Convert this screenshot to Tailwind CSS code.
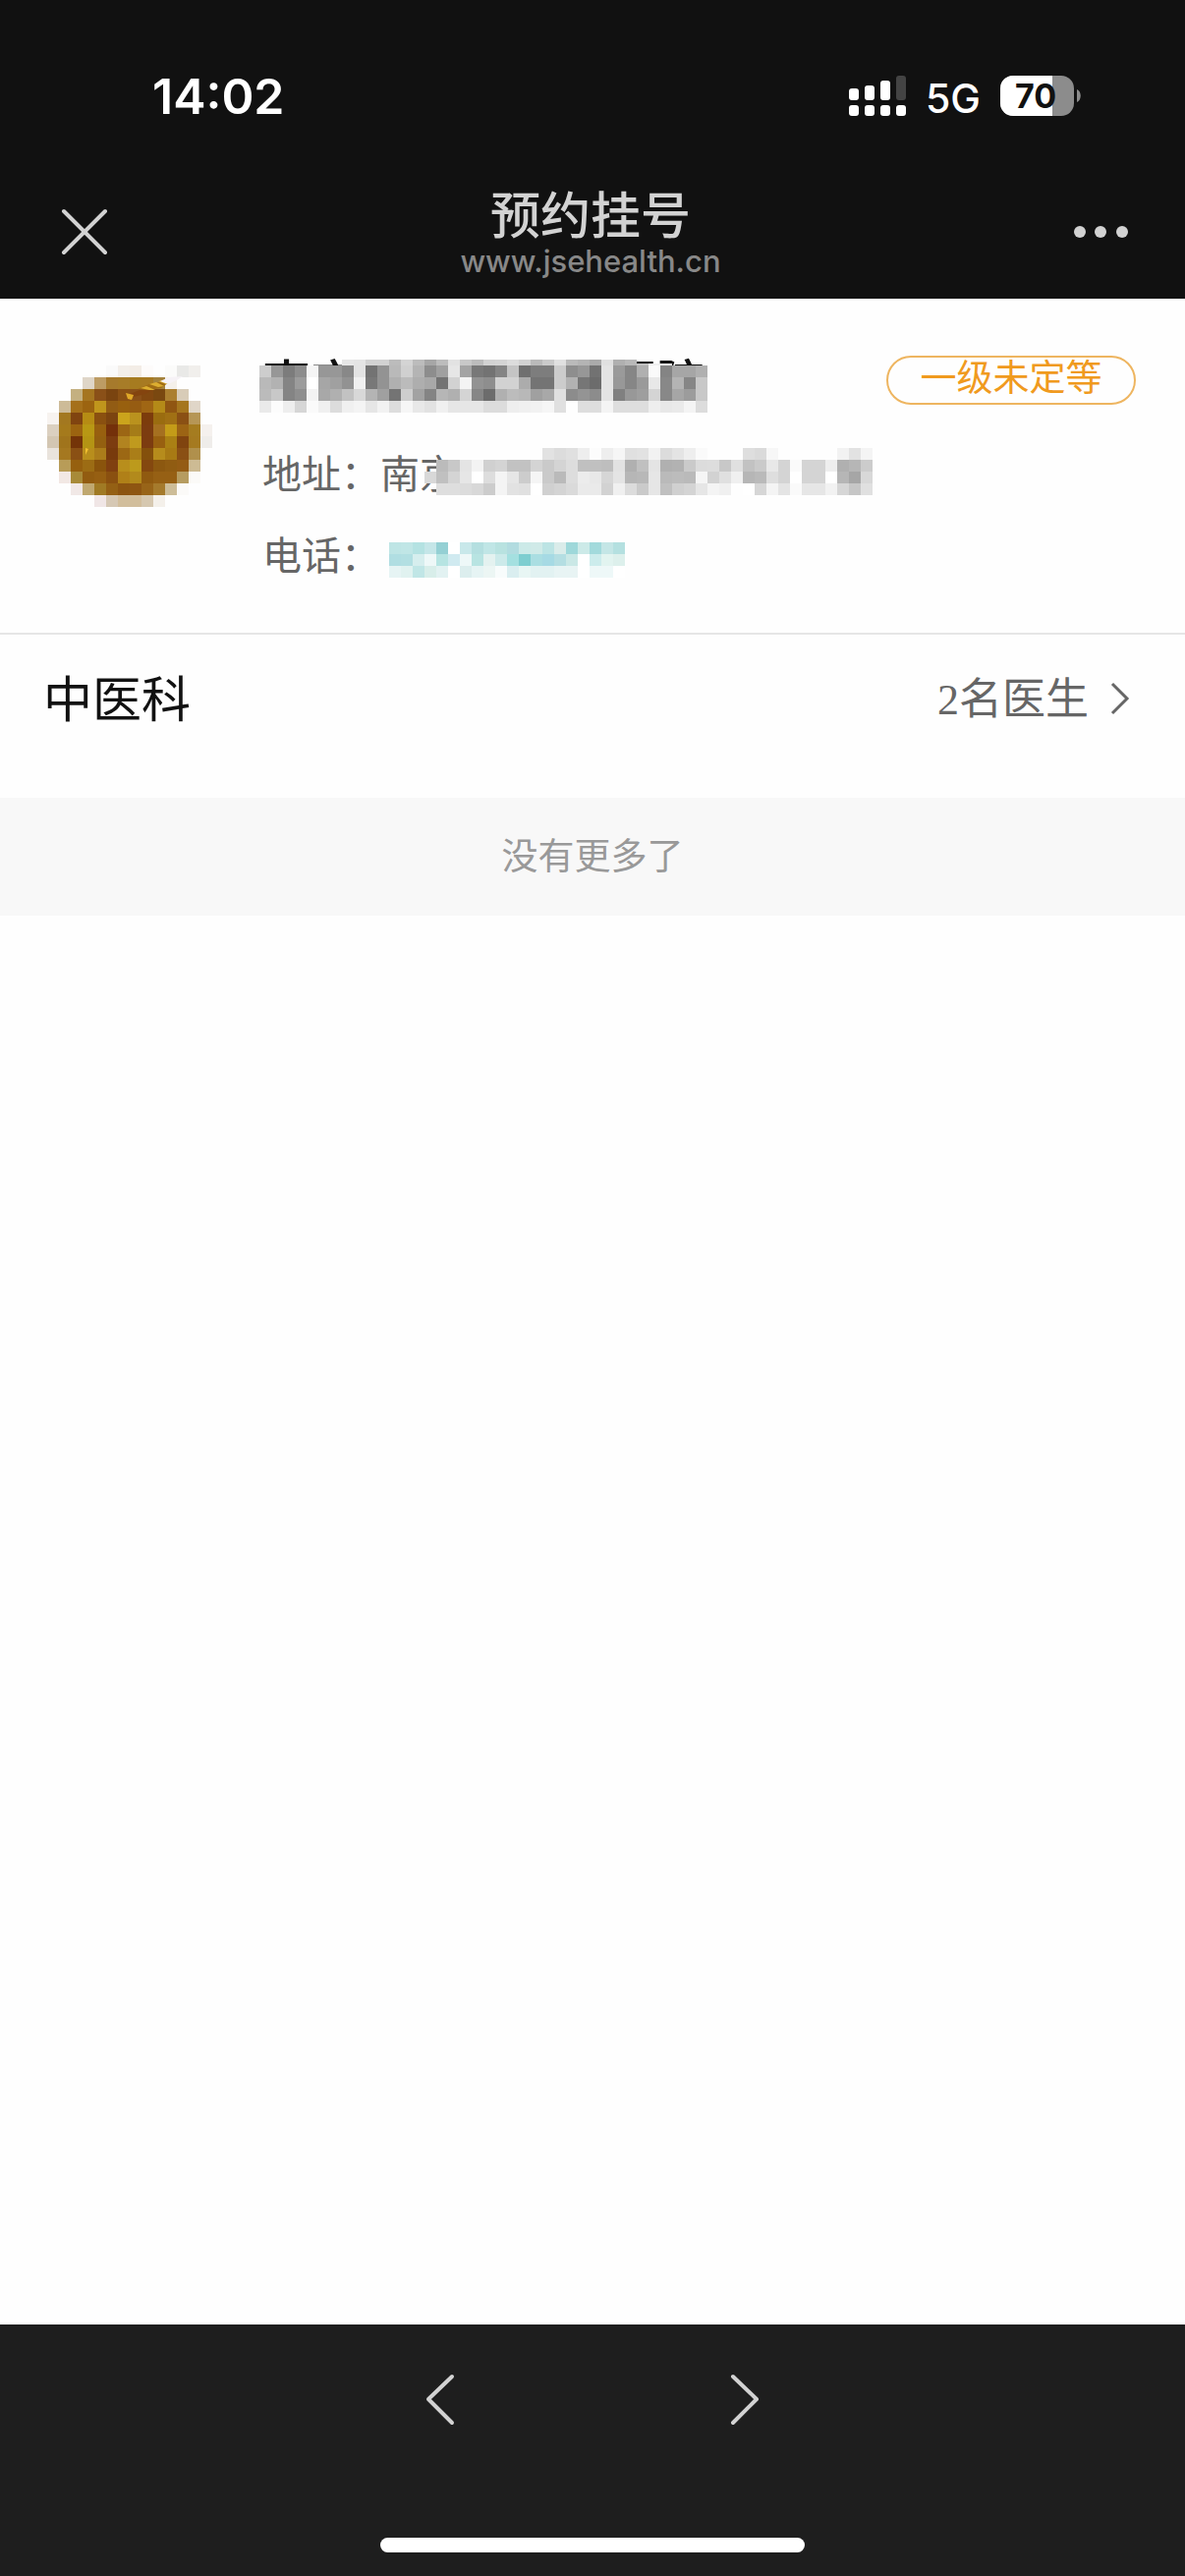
<!DOCTYPE html>
<html lang="zh-CN">
  <head>
    <meta charset="UTF-8" />
    <meta name="viewport" content="width=device-width, initial-scale=1.0" />
    <title>预约挂号</title>
    <!-- Tailwind CDN -->
    <script src="https://cdn.jsdelivr.net/npm/@tailwindcss/browser@4"></script>
  </head>
  <body
    class="min-h-screen flex flex-col bg-[#fefefe] font-['Inter','Noto_Sans_CJK_SC',sans-serif]"
  >
    <header class="bg-[#111111]">
      <!-- Status bar -->
      <div class="flex items-center justify-between h-[172px] pt-6 pl-[155px] pr-[106px] text-white">
        <time class="text-[50px] leading-none font-semibold">14:02</time>
        <div class="flex items-center gap-5">
          <svg class="w-[58px] h-[42px]" viewBox="0 0 58 42" fill="#fff" aria-label="信号">
            <rect x="0" y="13" width="10" height="12" rx="3" />
            <rect x="16" y="10" width="10" height="15" rx="3" />
            <rect x="32" y="5" width="10" height="20" rx="3" />
            <rect x="48" y="0" width="10" height="25" rx="3" fill="#444" />
            <rect x="0" y="30" width="10" height="11" rx="3" />
            <rect x="16" y="30" width="10" height="11" rx="3" />
            <rect x="32" y="30" width="10" height="11" rx="3" />
            <rect x="48" y="30" width="10" height="11" rx="3" />
          </svg>
          <span class="text-[41px] leading-[46px] font-medium pt-1">5G</span>
          <svg class="w-[82px] h-[42px]" viewBox="0 0 82 42" aria-label="电量">
            <defs>
              <clipPath id="battery"><rect width="75" height="41" rx="13" /></clipPath>
            </defs>
            <g clip-path="url(#battery)">
              <rect width="75" height="41" fill="#8c8c8c" />
              <rect width="53" height="41" fill="#fff" />
            </g>
            <path d="M78 14c5 2 5 11 0 13z" fill="#8c8c8c" />
            <text x="36" y="33" text-anchor="middle" fill="#111" font-size="34" font-weight="700">70</text>
          </svg>
        </div>
      </div>

      <!-- Title bar -->
      <div class="flex items-center justify-between h-[132px] px-[58px] pb-1">
        <button type="button" aria-label="关闭" class="w-14 h-14">
          <svg class="w-14 h-14" viewBox="0 0 56 56" fill="none" stroke="#d2d2d2" stroke-width="4" stroke-linecap="round">
            <path d="M7 7l42 42M49 7L7 49" />
          </svg>
        </button>
        <div class="flex flex-col items-center pr-1">
          <h1 class="text-[51px] leading-[60px] font-medium text-[#d2d2d2]">预约挂号</h1>
          <p class="text-[31px] leading-8 font-medium text-[#888888]">www.jsehealth.cn</p>
        </div>
        <button type="button" aria-label="更多" class="w-14 h-14">
          <svg class="w-14 h-14" viewBox="0 0 56 56" fill="#d2d2d2">
            <circle cx="7" cy="28" r="6" />
            <circle cx="28" cy="28" r="6" />
            <circle cx="50" cy="28" r="6" />
          </svg>
        </button>
      </div>
    </header>

    <main class="grow">
      <!-- Hospital -->
      <section class="flex items-start h-[342px] pl-12 pr-[50px] pt-[58px] border-b-2 border-[#e6e6e6]">
        <div class="relative w-[168px] h-36 mt-[10px]">
          <svg id="logo" class="w-[168px] h-36" viewBox="0 0 168 144" shape-rendering="crispEdges"></svg>
          <svg class="absolute inset-0 w-[168px] h-36" viewBox="0 0 168 144">
            <path d="M84 29l10-4 14-1-8 5-12 3z" fill="#84440f" />
            <path d="M80 28l8 2-2 5-4-1z" fill="#e0a828" />
            <path d="M92 24l12-5 14-3 6 1-8 6-14 2z" fill="#a06c14" />
            <path d="M95 23l6-2 9 4-6 0zM104 19l7-2 8 4-6 1zM113 16l6-1 5 3-3 1z" fill="#dcae30" />
            <path d="M115 16l9-4 14-1-6 4-9 4z" fill="#f6f2f6" />
            <path d="M39 84l3 1-3 6z" fill="#f0c030" />
          </svg>
        </div>
        <div class="grow flex flex-col ml-[51px]">
          <div class="relative flex justify-between w-[450px] h-[62px] text-[49px] leading-[56px] font-medium text-[#111111]">
            <span>南京</span>
            <span>医院</span>
            <svg id="name" class="absolute top-0 -left-[3px] w-[456px] h-[62px]" viewBox="0 -4 456 62" shape-rendering="crispEdges"></svg>
          </div>
          <p class="relative mt-7 text-[40px] leading-[62px] text-[#666666]">
            地址：南京
            <svg id="address" class="absolute top-[4px] left-[165px] w-[456px] h-12" viewBox="0 0 456 48" shape-rendering="crispEdges"></svg>
          </p>
          <p class="flex items-center mt-[22px] text-[40px] leading-[60px] text-[#666666]">
            电话：
            <a href="tel:" aria-label="拨打电话" class="ml-[9px] mt-2">
              <svg id="phone" class="w-60 h-9" viewBox="0 0 240 36" shape-rendering="crispEdges"></svg>
            </a>
          </p>
        </div>
        <span class="shrink-0 w-[254px] h-[50px] border-2 border-[#eeb560] rounded-full text-center text-[37px] leading-[42px] text-[#f09a1e]">一级未定等</span>
      </section>

      <!-- Departments -->
      <a href="#" class="flex items-start justify-between h-[166px] pt-8 pl-11 pr-[54px]">
        <span class="text-[50px] leading-[68px] text-[#111111]">中医科</span>
        <span class="flex items-center gap-5 text-[44px] leading-[62px] text-[#666666] font-['Liberation_Serif','Noto_Sans_CJK_SC',serif]">
          <span class="pt-1">2名医生</span>
          <svg class="w-6 h-9" viewBox="0 0 24 36" fill="none" stroke="#666" stroke-width="3">
            <path d="M4 3l15 15L4 33" />
          </svg>
        </span>
      </a>

      <p class="h-[120px] bg-[#f8f8f8] text-center text-[37px] leading-[120px] text-[#999999]">没有更多了</p>
    </main>

    <!-- Bottom navigation -->
    <footer class="flex flex-col items-center justify-between h-64 pt-12 pb-6 bg-[#1e1e1e]">
      <nav class="flex gap-[254px]">
        <button type="button" aria-label="后退" class="w-14 h-14">
          <svg class="w-14 h-14" viewBox="0 0 56 56" fill="none" stroke="#d2d2d2" stroke-width="4" stroke-linecap="round" stroke-linejoin="round">
            <path d="M40 5L16 28l24 24" />
          </svg>
        </button>
        <button type="button" aria-label="前进" class="w-14 h-14">
          <svg class="w-14 h-14" viewBox="0 0 56 56" fill="none" stroke="#d2d2d2" stroke-width="4" stroke-linecap="round" stroke-linejoin="round">
            <path d="M16 5l24 23-24 24" />
          </svg>
        </button>
      </nav>
      <div class="w-[432px] h-[15px] rounded-full bg-white"></div>
    </footer>

    <script>
      const CELL = 12;

      // Each row: y, height and a list of hex colours ("." leaves the cell empty)
      function drawMosaic(id, rows) {
        const svg = document.getElementById(id);
        rows.forEach(([y, height, cells]) => {
          cells.split(" ").forEach((color, i) => {
            if (color === ".") return;
            const rect = document.createElementNS("http://www.w3.org/2000/svg", "rect");
            rect.setAttribute("x", i * CELL);
            rect.setAttribute("y", y);
            rect.setAttribute("width", CELL);
            rect.setAttribute("height", height);
            // two digits are a grey level
            rect.setAttribute("fill", "#" + (color.length === 2 ? color.repeat(3) : color));
            svg.appendChild(rect);
          });
        });
      }

      drawMosaic("logo", [
        [0, 12, ". . . . . fafafa f3efea f3ede6 fdfbfa . fbfbfa e9e9e7 f1efec ."],
        [12, 12, ". . . dfd6c8 bd9c64 a67a2c a77c28 a67b20 a77a22 a4823c f4f0ea . . ."],
        [24, 12, ". . c4b080 a57520 8a5018 7a4410 8a5014 8a5018 824810 7a4810 ab7f30 d8ccb8 . ."],
        [36, 12, ". cdbb98 a5701a 9c6410 c0961c 925c14 98600f 965c12 a06614 b48a18 905612 a5761e e0d6c8 ."],
        [48, 12, "f7f3f0 a37820 804410 b68c14 8a5010 7c4410 cba41c ba921e 7c3c0c 9a6c10 a07014 8a5014 b69656 ."],
        [60, 12, "dbd0c0 a57a1c 9c6410 b89814 98600f 74300a 9c6614 a57c18 7c3c10 a57020 c49c18 9c6414 a57c20 f5f1ee"],
        [72, 12, "d3c6b2 a0741c 743408 b49414 946010 7c3c10 b28420 c09a1e 7c3c10 986010 aa8014 80440f a57a20 efedea"],
        [84, 12, "e9e3dc a57820 8a5014 b88e1c ab7c1a 783a0c 9c6814 aa7e18 84500c b68c1c a87a14 8a5014 b0904c ."],
        [96, 12, ". b89c58 96600f 9c6c14 8a540c 804010 b88e1c bc9a1c 84480f 8c5810 905c12 945c14 cdbb94 ."],
        [108, 12, ". f2e8e4 a88a38 925c10 965f12 8a5010 b08018 b28a1c 905a10 966014 966014 b69c60 fbfaf8 ."],
        [120, 12, ". . f1e8e6 c0a870 a07a24 946014 8c5410 8e5612 986418 a57a2c cdbd98 fbfaf8 . ."],
        [132, 12, ". . . . f0e6e6 d6c8b4 d2be9c d2be9c d6c8b0 f4f0ea . . . ."],
      ]);

      drawMosaic("name", [
        [0, 6, ". . . . . . . e6 e4 d2 d2 bc d4 bc a6 bc e2 c8 bc d2 d4 dc d2 ba ca e0 ba b4 aa e0 b0 b8 . . . . . ."],
        [4, 2, ". . . . . . . . . . . . . . . . . . . . . . . . . . . . . . . . c0 f0 f0 . . ."],
        [6, 12, "cd 97 7c 8d f5 97 97 88 e3 73 93 b9 d0 b4 8d a0 e6 a4 78 73 84 c4 70 7d 7d cc 8e 97 72 e4 9a 86 b0 fa 84 a6 a6 b0"],
        [18, 12, "b9 b2 84 9c ff a6 a0 92 f0 78 93 b0 bb ae a8 73 d2 f4 93 8e d2 d2 ac 74 74 cc b2 76 6c e4 98 86 9a e8 88 b4 86 c8"],
        [30, 12, "bb c8 84 8e f3 a8 b0 c2 d8 b4 a0 74 ce a2 84 b6 b0 d4 86 6c b0 bc b8 a0 a8 e0 8c 94 8c e4 80 98 9e d4 88 a6 9c c8"],
        [42, 12, "ea fc ee d6 fa f0 dc f0 f4 e6 f2 dd f6 e8 e2 f0 e6 e6 e6 dc dc ee f0 f2 f6 e0 fe de de f4 de de de ee e8 ea f4 dc"],
      ]);

      drawMosaic("address", [
        [0, 12, ". . . . . . . . . . e2 dc e0 ee fc ee f6 e0 e2 f2 dc e4 ee fa . . . de da f7 . . . . . f2 e2 f4"],
        [12, 12, ". bb c8 e4 f3 d0 d4 c2 c2 d4 ca d4 dd c0 c0 be e2 b0 c0 e4 b0 b2 ca dc dd c8 e0 c2 ca e8 d4 fa d4 d4 ee b0 b6 cc"],
        [24, 12, "d8 c0 d4 e6 ff dd f4 e6 cc f5 ca ba dd ec e8 d6 e4 b6 b8 e6 ba bc ba f5 d2 e0 f0 b6 ba de d4 ff d4 d4 ff b6 a6 d8"],
        [36, 12, ". de de dc d8 cc f4 e2 e0 ff d0 d4 da ea ea d2 f0 dc ca e6 c0 d0 d4 e6 f4 f0 fe ff d6 f4 e4 fa e6 e6 f2 d6 c6 e0"],
      ]);

      drawMosaic("phone", [
        [0, 12, "bee5e5 c0e6e6 b4e2e2 c4e6e8 94d0d4 ff c8e8ea b4dfe0 c0e6e6 b8e2e0 b2dce0 cceae8 d0eae8 bce4e4 daecea 9ed8da cceae8 a2dadc c4e6e6 b4e0e0"],
        [12, 12, "b0dee2 b2dfe2 d6eeee eef8f8 b6e4e2 d0eaf0 eef8f8 b8e4e2 e4f2f0 cceaea a4e0e0 7eced0 aadee2 a6dae4 b4dee2 cae8e6 ff ccecec e2f4f0 ddf0ec"],
        [24, 12, "e6f4f4 e0f2f0 c0e6e6 d8eeea e2f2f2 ff dceeee e6f4f4 ecf6f4 f8fcfc daeef0 e8f6f4 e2f2f2 e2f2f2 e8f4f4 e8f4f4 ff eef8f8 eef8f8 ff"],
      ]);
    </script>
  </body>
</html>
